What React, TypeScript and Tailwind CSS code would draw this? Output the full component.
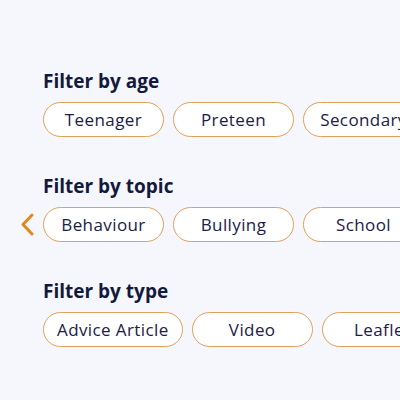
const groups = [
  { title: 'Filter by age', items: ['Teenager', 'Preteen', 'Secondary'], back: false },
  { title: 'Filter by topic', items: ['Behaviour', 'Bullying', 'School'], back: true },
  { title: 'Filter by type', items: ['Advice Article', 'Video', 'Leaflet'], back: false },
];

function Pill({ label }: { label: string }) {
  return (
    <button className="shrink-0 h-[35px] min-w-[121px] px-[13px] rounded-full border border-[#dfa05a] bg-white text-[17px] font-medium text-[#1b2049] tracking-[0.4px] whitespace-nowrap">
      {label}
    </button>
  );
}

export default function App() {
  return (
    <div
      className="w-[400px] h-[400px] overflow-hidden bg-[#f6f7fc] pt-[70px] pl-[43px] flex flex-col gap-[38px]"
      style={{ fontFamily: '"Open Sans", "Liberation Sans", sans-serif' }}
    >
      {groups.map((g) => (
        <div key={g.title}>
          <h2 className="text-[19px] leading-[22px] font-bold text-[#131a3d] mb-[10px]">{g.title}</h2>
          <div className="relative flex gap-[9px]">
            {g.back && (
              <svg
                className="absolute left-[-22px] top-[6px]"
                width="13"
                height="23"
                viewBox="0 0 13 23"
                fill="none"
              >
                <path d="M11 2 L2 11.5 L11 21" stroke="#e0891c" strokeWidth="3" strokeLinecap="round" strokeLinejoin="round" />
              </svg>
            )}
            {g.items.map((it) => (
              <Pill key={it} label={it} />
            ))}
          </div>
        </div>
      ))}
    </div>
  );
}
